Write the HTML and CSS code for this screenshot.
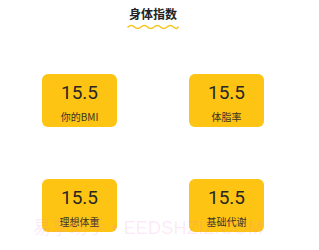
FILE: index.html
```html
<!DOCTYPE html>
<html lang="zh">
<head>
<meta charset="utf-8">
<link rel="stylesheet" href="styles.css">
</head>
<body>
<div class="page">
  <div class="head">
    <h1 class="title">身体指数</h1>
    <svg class="wave" width="52" height="6" viewBox="0 0 52 6">
      <path d="M1 3 Q4.25 0 7.5 3 T14 3 T20.5 3 T27 3 T33.5 3 T40 3 T46.5 3 T51 3" fill="none" stroke="#f6c51a" stroke-width="1.6" stroke-linecap="round"/>
    </svg>
  </div>
  <div class="grid">
    <div class="card"><div class="num">15.5</div><div class="label">你的BMI</div></div>
    <div class="card"><div class="num">15.5</div><div class="label">体脂率</div></div>
    <div class="card"><div class="num">15.5</div><div class="label">理想体重</div></div>
    <div class="card"><div class="num">15.5</div><div class="label">基础代谢</div></div>
  </div>
  <div class="watermark">易享助手 • EEDSHZIZ.COM</div>
</div>
</body>
</html>
```
FILE: styles.css
```css
html, body {
  margin: 0;
  padding: 0;
  background: #ffffff;
}
body {
  font-family: "Noto Sans CJK SC", "Noto Sans", sans-serif;
  width: 319px;
  height: 250px;
  overflow: hidden;
}
.page {
  position: relative;
  width: 319px;
  height: 250px;
  padding-left: 42px;
  box-sizing: border-box;
}
.head {
  width: 222px;
  display: flex;
  flex-direction: column;
  align-items: center;
  padding-top: 6px;
}
.title {
  margin: 0;
  font-size: 12px;
  line-height: 16px;
  font-weight: 700;
  color: #222;
}
.wave {
  display: block;
  margin-top: 2px;
}
.grid {
  margin-top: 44px;
  display: grid;
  grid-template-columns: 75px 75px;
  column-gap: 72px;
  row-gap: 52px;
}
.card {
  height: 53px;
  background: #fec414;
  border-radius: 6px;
  display: flex;
  flex-direction: column;
  align-items: center;
  padding-top: 7px;
  box-sizing: border-box;
}
.num {
  font-family: Roboto, "Noto Sans", sans-serif;
  font-size: 19px;
  line-height: 24px;
  color: #262626;
}
.label {
  margin-top: 5px;
  font-size: 10px;
  line-height: 13px;
  color: #3a3324;
}
.watermark {
  position: absolute;
  left: 33px;
  top: 217px;
  font-family: "Liberation Sans", "Noto Sans CJK SC", sans-serif;
  font-size: 18px;
  line-height: 22px;
  color: rgba(240, 120, 215, 0.16);
  white-space: nowrap;
  letter-spacing: 0.3px;
}
```
